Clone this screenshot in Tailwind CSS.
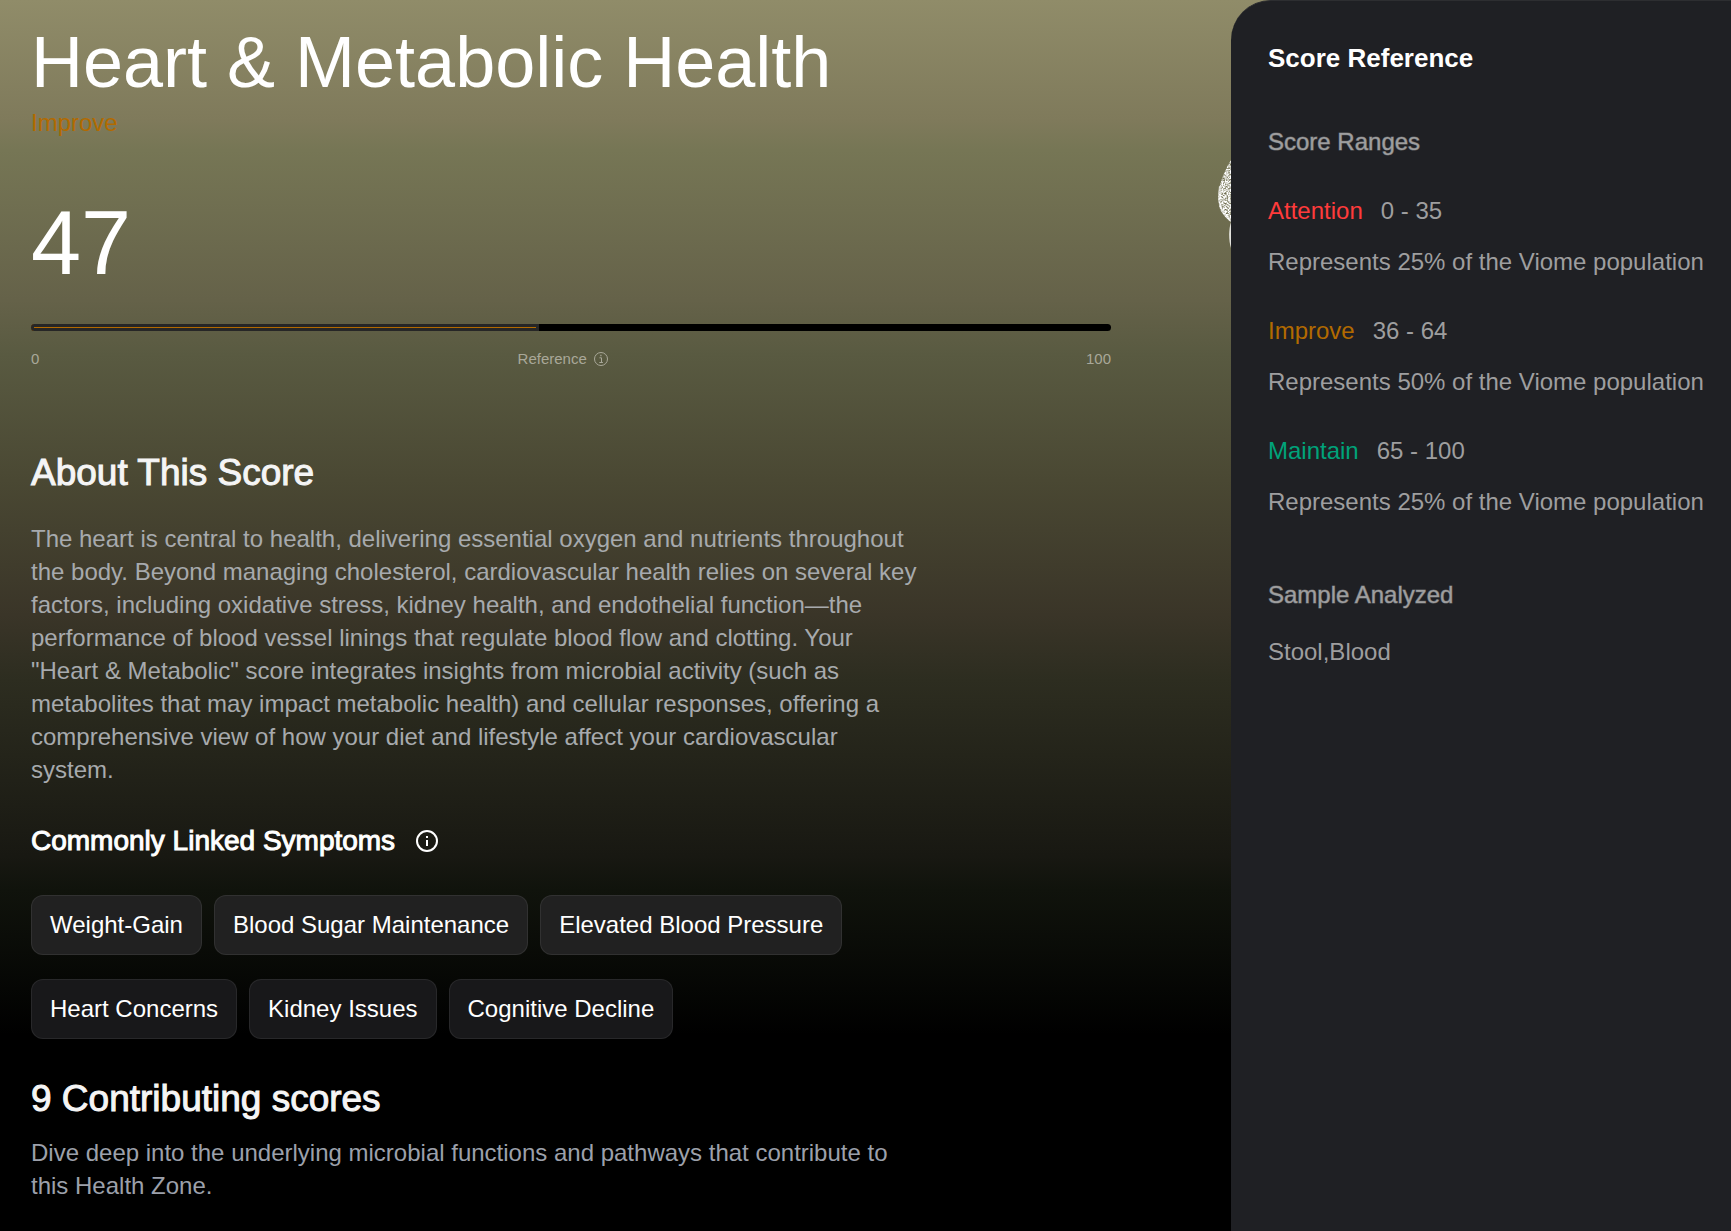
<!DOCTYPE html>
<html lang="en">
<head>
<meta charset="utf-8">
<meta name="viewport" content="width=device-width, initial-scale=1">
<title>Heart &amp; Metabolic Health</title>
<script src="https://cdn.jsdelivr.net/npm/@tailwindcss/browser@4"></script>
</head>
<body class="flex min-h-screen bg-black bg-[linear-gradient(180deg,#908c69_0px,#7f7a5b_120px,#767655_150px,#656249_300px,#595a41_355px,#4a4833_480px,#3a3528_615px,#2d2d20_680px,#181812_856px,#10130c_890px,#000_1035px)] bg-no-repeat font-['Liberation_Sans',Arial,sans-serif] text-2xl text-white">
  <main class="relative min-w-0 flex-1 overflow-hidden pt-[22px] pr-[120px] pb-7 pl-[31px]">
    <!-- particle figure, partly behind the side panel -->
    <svg class="absolute top-[158px] right-0 h-[92px] w-[14px]" viewBox="0 0 14 92" aria-hidden="true">
      <defs>
        <filter id="grain" x="0" y="0" width="1" height="1">
          <feTurbulence type="fractalNoise" baseFrequency="0.6" numOctaves="2" seed="4" result="n"/>
          <feColorMatrix in="n" type="matrix" values="0 0 0 0 1  0 0 0 0 1  0 0 0 0 1  0 2.5 0 0 -0.6" result="m"/>
          <feComposite in="m" in2="SourceGraphic" operator="in"/>
        </filter>
      </defs>
      <path d="M14 2C9 10 5 19 2.5 29C.5 39 1 47 4 53C7 58 10 61 14 64Z" fill="#fff" filter="url(#grain)"/>
      <path d="M14 64C11.5 72 11.5 82 14 90Z" fill="#fff" fill-opacity=".8"/>
      <path d="M3 28C1.500 38 2 46 5 52C8 57 10 60 14 63" fill="none" stroke="#fff" stroke-opacity=".6" stroke-width="2"/>
    </svg>

    <h1 class="text-7xl leading-[80px]">Heart &amp; Metabolic Health</h1>
    <p class="mt-[5px] leading-8 text-[#b26a00]">Improve</p>
    <p class="mt-14 text-[90px] leading-[96px]">47</p>

    <div class="mt-[33px] h-[7px] overflow-hidden rounded-full bg-black" role="progressbar" aria-label="Score" aria-valuenow="47" aria-valuemin="0" aria-valuemax="100">
      <div class="h-full border-3 border-[#262626] bg-[#b26a00]" style="width:47%"></div>
    </div>
    <div class="mt-[18px] flex justify-between text-[15px] leading-5 text-[#a9a899]">
      <span>0</span>
      <button type="button" class="flex items-center gap-[7px]">
        Reference
        <svg class="size-[14px]" viewBox="0 0 14 14" fill="none" stroke="currentColor" aria-hidden="true">
          <circle cx="7" cy="7" r="6.5"/>
          <path d="M5.5 5.8h2v4.5M5.3 10.5h3.6"/>
          <path d="M6.3 3.5h1.2" stroke-width="1.3"/>
        </svg>
      </button>
      <span>100</span>
    </div>

    <section>
      <h2 class="mt-[84px] text-[37px] leading-10 text-[#f5f5f5] [-webkit-text-stroke:1px]">About This Score</h2>
      <p class="mt-[29px] max-w-[892px] leading-[33px] text-[#a7aaad]">The heart is central to health, delivering essential oxygen and nutrients throughout the body. Beyond managing cholesterol, cardiovascular health relies on several key factors, including oxidative stress, kidney health, and endothelial function—the performance of blood vessel linings that regulate blood flow and clotting. Your "Heart &amp; Metabolic" score integrates insights from microbial activity (such as metabolites that may impact metabolic health) and cellular responses, offering a comprehensive view of how your diet and lifestyle affect your cardiovascular system.</p>
    </section>

    <section>
      <div class="mt-[39px] flex items-center gap-5">
        <h3 class="text-[28px] leading-8 [-webkit-text-stroke:1px]">Commonly Linked Symptoms</h3>
        <button type="button" aria-label="About linked symptoms">
          <svg class="size-[24px]" viewBox="0 0 24 24" fill="none" stroke="currentColor" stroke-width="2" aria-hidden="true">
            <circle cx="12" cy="12" r="10"/>
            <path d="M12 11v6M12 7v2"/>
          </svg>
        </button>
      </div>
      <ul class="mt-[38px] flex max-w-[892px] flex-wrap gap-x-3 gap-y-6 leading-[58px]">
        <li class="rounded-xl border border-white/7 bg-[#212121] px-[18px]">Weight-Gain</li>
        <li class="rounded-xl border border-white/7 bg-[#212121] px-[18px]">Blood Sugar Maintenance</li>
        <li class="rounded-xl border border-white/7 bg-[#212121] px-[18px]">Elevated Blood Pressure</li>
        <li class="rounded-xl border border-white/7 bg-[#18181a] px-[18px]">Heart Concerns</li>
        <li class="rounded-xl border border-white/7 bg-[#18181a] px-[18px]">Kidney Issues</li>
        <li class="rounded-xl border border-white/7 bg-[#18181a] px-[18px]">Cognitive Decline</li>
      </ul>
    </section>

    <section>
      <h2 class="mt-10 text-[37px] leading-10 text-[#f5f5f5] [-webkit-text-stroke:1px]">9 Contributing scores</h2>
      <p class="mt-[17px] max-w-[892px] leading-[33px] text-[#9ca0ab]">Dive deep into the underlying microbial functions and pathways that contribute to this Health Zone.</p>
    </section>
  </main>

  <aside class="w-[500px] shrink-0 rounded-tl-[40px] border-t border-[#2d2e31] bg-[#1f2024] pt-[41px] pl-[37px] leading-8 text-[#9e9e9f]">
    <h2 class="text-[26px] leading-8 font-bold text-white">Score Reference</h2>
    <h3 class="mt-[52px] [-webkit-text-stroke:1px_#9e9e9f80]">Score Ranges</h3>
    <dl>
      <dt class="mt-[37px] flex gap-[18px]"><span class="text-[#ff3b3b]">Attention</span>0 - 35</dt>
      <dd class="mt-[19px]">Represents 25% of the Viome population</dd>
      <dt class="mt-[37px] flex gap-[18px]"><span class="text-[#b26a00]">Improve</span>36 - 64</dt>
      <dd class="mt-[19px]">Represents 50% of the Viome population</dd>
      <dt class="mt-[37px] flex gap-[18px]"><span class="text-[#00a37a]">Maintain</span>65 - 100</dt>
      <dd class="mt-[19px]">Represents 25% of the Viome population</dd>
    </dl>
    <h3 class="mt-[61px] [-webkit-text-stroke:1px_#9e9e9f80]">Sample Analyzed</h3>
    <p class="mt-[25px]">Stool,Blood</p>
  </aside>
</body>
</html>
